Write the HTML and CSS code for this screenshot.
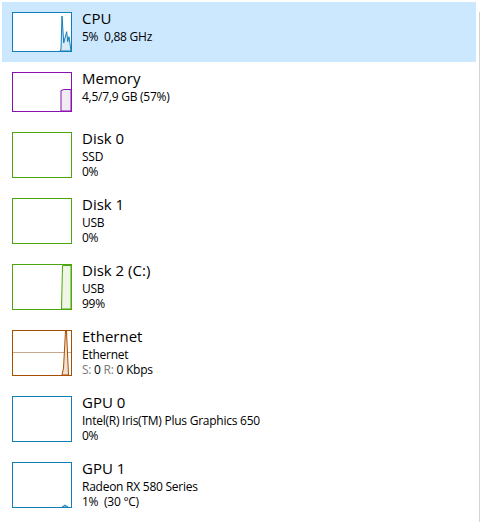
FILE: index.html
```html
<!DOCTYPE html>
<html>
<head>
<meta charset="utf-8">
<link rel="stylesheet" href="styles.css">
</head>
<body>
<div class="page">
  <div class="list">
    <div class="item selected">
      <svg class="thumb" width="60" height="40" viewBox="0 0 60 40">
        <rect x="0.5" y="0.5" width="59" height="39" class="bg cpu-b"/>
        <path d="M48,39 L49,37 L50,4 L51.7,31 L54.7,19.7 L55.7,29.7 L57,24.7 L59,39 Z" class="cpu-f"/>
      </svg>
      <div class="info">
        <div class="title">CPU</div>
        <div class="sub">5%&nbsp; 0,88 GHz</div>
      </div>
    </div>
    <div class="item">
      <svg class="thumb" width="60" height="40" viewBox="0 0 60 40">
        <rect x="0.5" y="0.5" width="59" height="39" class="bg mem-b"/>
        <path d="M49,39 L49,18.5 L52,17.5 L59,17.5 L59,39 Z" class="mem-f"/>
      </svg>
      <div class="info">
        <div class="title">Memory</div>
        <div class="sub">4,5/7,9 GB (57%)</div>
      </div>
    </div>
    <div class="item">
      <svg class="thumb" width="60" height="46" viewBox="0 0 60 46">
        <rect x="0.5" y="0.5" width="59" height="45" class="bg disk-b"/>
      </svg>
      <div class="info">
        <div class="title">Disk 0</div>
        <div class="sub">SSD</div>
        <div class="sub">0%</div>
      </div>
    </div>
    <div class="item">
      <svg class="thumb" width="60" height="46" viewBox="0 0 60 46">
        <rect x="0.5" y="0.5" width="59" height="45" class="bg disk-b"/>
      </svg>
      <div class="info">
        <div class="title">Disk 1</div>
        <div class="sub">USB</div>
        <div class="sub">0%</div>
      </div>
    </div>
    <div class="item">
      <svg class="thumb" width="60" height="46" viewBox="0 0 60 46">
        <rect x="0.5" y="0.5" width="59" height="45" class="bg disk-b"/>
        <path d="M49.5,45 L50.5,1.5 L59,1.5 L59,45 Z" class="disk-f"/>
      </svg>
      <div class="info">
        <div class="title">Disk 2 (C:)</div>
        <div class="sub">USB</div>
        <div class="sub">99%</div>
      </div>
    </div>
    <div class="item">
      <svg class="thumb" width="60" height="46" viewBox="0 0 60 46">
        <rect x="0.5" y="0.5" width="59" height="45" class="bg eth-b"/>
        <line x1="1" y1="22.5" x2="59" y2="22.5" class="eth-mid"/>
        <path d="M50,45 L51.5,38 L53.5,1 L54.5,1 L56.5,45 Z" class="eth-f"/>
      </svg>
      <div class="info">
        <div class="title">Ethernet</div>
        <div class="sub">Ethernet</div>
        <div class="sub"><span class="muted">S:</span> 0 <span class="muted">R:</span> 0 Kbps</div>
      </div>
    </div>
    <div class="item">
      <svg class="thumb" width="60" height="46" viewBox="0 0 60 46">
        <rect x="0.5" y="0.5" width="59" height="45" class="bg gpu-b"/>
      </svg>
      <div class="info">
        <div class="title">GPU 0</div>
        <div class="sub">Intel(R) Iris(TM) Plus Graphics 650</div>
        <div class="sub">0%</div>
      </div>
    </div>
    <div class="item">
      <svg class="thumb" width="60" height="46" viewBox="0 0 60 46">
        <rect x="0.5" y="0.5" width="59" height="45" class="bg gpu-b"/>
        <path d="M50,45 L51.5,44 L53,43 L54.5,44 L56,45 Z" class="gpu-f"/>
      </svg>
      <div class="info">
        <div class="title">GPU 1</div>
        <div class="sub">Radeon RX 580 Series</div>
        <div class="sub">1%&nbsp; (30 °C)</div>
      </div>
    </div>
  </div>
  <div class="scroll"></div>
</div>
</body>
</html>
```
FILE: styles.css
```css
html, body {
  margin: 0;
  padding: 0;
  background: #ffffff;
}
body {
  font-family: "Open Sans", "Noto Sans", sans-serif;
  color: #000000;
  height: 522px;
  overflow: hidden;
}
.page {
  display: flex;
  height: 522px;
}
.list {
  width: 474px;
  margin: 2px 0 0 2px;
  display: flex;
  flex-direction: column;
}
.item {
  display: flex;
  align-items: flex-start;
  gap: 10px;
  padding: 6px 10px 10px 10px;
}
.item.selected {
  background: #cce8ff;
}
.thumb {
  display: block;
  flex: none;
  margin-top: 4px;
}
.info {
  margin-bottom: -4px;
}
.title {
  font-size: 15px;
  line-height: 21px;
}
.sub {
  font-size: 12px;
  line-height: 15px;
  letter-spacing: -0.25px;
  white-space: nowrap;
}
.muted {
  color: #7a7a7a;
}
.scroll {
  margin: 12px 0 0 3px;
  border-left: 1px solid #d4d4d4;
}
.bg { fill: #ffffff; stroke-width: 1; }
.cpu-b { stroke: #117dbb; }
.cpu-f { fill: #d9eaf5; stroke: #117dbb; stroke-width: 1; }
.mem-b { stroke: #8b12ae; }
.mem-f { fill: #f1ecf3; stroke: #8b12ae; stroke-width: 1; }
.disk-b { stroke: #4da60c; }
.disk-f { fill: #eef6e6; stroke: #4da60c; stroke-width: 1; }
.eth-b { stroke: #a74f01; }
.eth-mid { stroke: #c9a98c; stroke-width: 1; }
.eth-f { fill: #f3e1d0; stroke: #a74f01; stroke-width: 1; }
.gpu-b { stroke: #117dbb; }
.gpu-f { fill: #d9eaf5; stroke: #117dbb; stroke-width: 1; }
```
